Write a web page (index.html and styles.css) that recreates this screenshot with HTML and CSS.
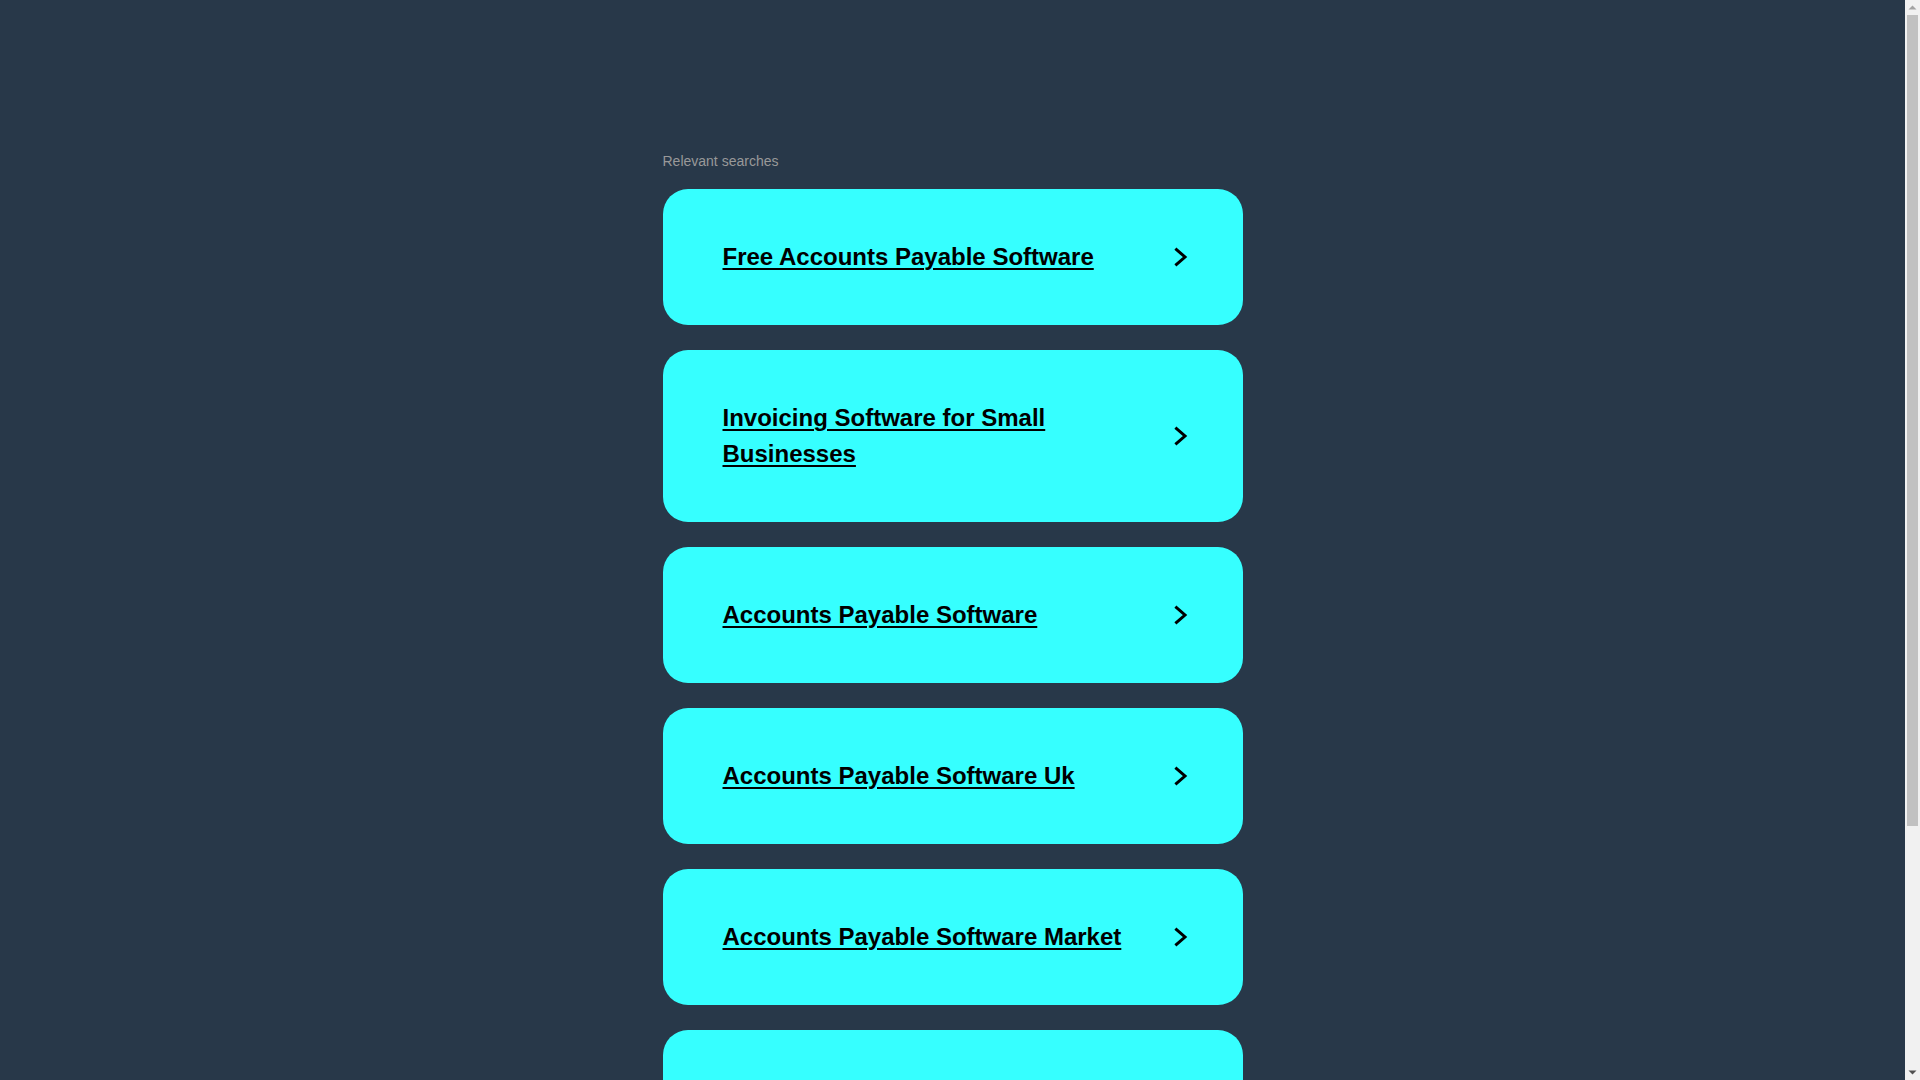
FILE: index.html
```html
<!DOCTYPE html>
<html lang="en">
<head>
<meta charset="utf-8">
<title>Relevant searches</title>
<link rel="stylesheet" href="styles.css">
</head>
<body>
<main class="page">
  <section class="searches">
    <p class="searches-title">Relevant searches</p>
    <ul class="search-list">
      <li><a class="search-card" href="#"><span class="search-text">Free Accounts Payable Software</span><svg class="chev" viewBox="0 0 16 20" width="16" height="20"><polyline points="3.5,2.5 12,10 3.5,17.5"/></svg></a></li>
      <li><a class="search-card" href="#"><span class="search-text">Invoicing Software for Small Businesses</span><svg class="chev" viewBox="0 0 16 20" width="16" height="20"><polyline points="3.5,2.5 12,10 3.5,17.5"/></svg></a></li>
      <li><a class="search-card" href="#"><span class="search-text">Accounts Payable Software</span><svg class="chev" viewBox="0 0 16 20" width="16" height="20"><polyline points="3.5,2.5 12,10 3.5,17.5"/></svg></a></li>
      <li><a class="search-card" href="#"><span class="search-text">Accounts Payable Software Uk</span><svg class="chev" viewBox="0 0 16 20" width="16" height="20"><polyline points="3.5,2.5 12,10 3.5,17.5"/></svg></a></li>
      <li><a class="search-card" href="#"><span class="search-text">Accounts Payable Software Market</span><svg class="chev" viewBox="0 0 16 20" width="16" height="20"><polyline points="3.5,2.5 12,10 3.5,17.5"/></svg></a></li>
      <li><a class="search-card" href="#"><span class="search-text">Accounts Payable Automation</span><svg class="chev" viewBox="0 0 16 20" width="16" height="20"><polyline points="3.5,2.5 12,10 3.5,17.5"/></svg></a></li>
    </ul>
  </section>
</main>
<div class="scrollbar" aria-hidden="true">
  <div class="sb-btn"><svg viewBox="0 0 15 15" width="15" height="15"><polygon points="3.5,9.5 11.5,9.5 7.5,5.5" fill="#a3a3a3"/></svg></div>
  <div class="sb-track"><div class="sb-thumb"></div></div>
  <div class="sb-btn"><svg viewBox="0 0 15 15" width="15" height="15"><polygon points="3.5,5.5 11.5,5.5 7.5,9.5" fill="#505050"/></svg></div>
</div>
</body>
</html>
```

FILE: styles.css
```css
html, body {
  margin: 0;
  padding: 0;
  background: #283849;
  font-family: "Liberation Sans", Arial, sans-serif;
}

.page {
  display: flex;
  justify-content: center;
  padding: 153px 15px 232px 0;
}

.searches {
  width: 580px;
}

.searches-title {
  margin: 0 0 20px;
  font-size: 14px;
  line-height: 16px;
  color: #999999;
}

.search-list {
  list-style: none;
  margin: 0;
  padding: 0;
  display: flex;
  flex-direction: column;
  gap: 25px;
}

.search-card {
  display: flex;
  align-items: center;
  gap: 20px;
  padding: 50px 53.5px 50px 60px;
  background: #36ffff;
  border-radius: 25px;
  color: #000000;
  text-decoration: none;
}

.search-text {
  flex: 1;
  font-size: 24px;
  line-height: 36px;
  font-weight: bold;
  text-decoration: underline;
  text-decoration-thickness: 2px;
  text-underline-offset: 3px;
}

.chev {
  flex: none;
  fill: none;
  stroke: #000000;
  stroke-width: 3;
  stroke-linecap: square;
  stroke-linejoin: miter;
}

/* simulated browser scrollbar */
.scrollbar {
  position: fixed;
  top: 0;
  right: 0;
  bottom: 0;
  width: 15px;
  background: #f1f1f1;
  display: flex;
  flex-direction: column;
}

.sb-btn {
  flex: none;
  height: 15px;
}

.sb-btn svg {
  display: block;
}

.sb-track {
  flex: 1;
  padding: 0 2px;
}

.sb-thumb {
  height: 811px;
  background: #c1c1c1;
}
```
